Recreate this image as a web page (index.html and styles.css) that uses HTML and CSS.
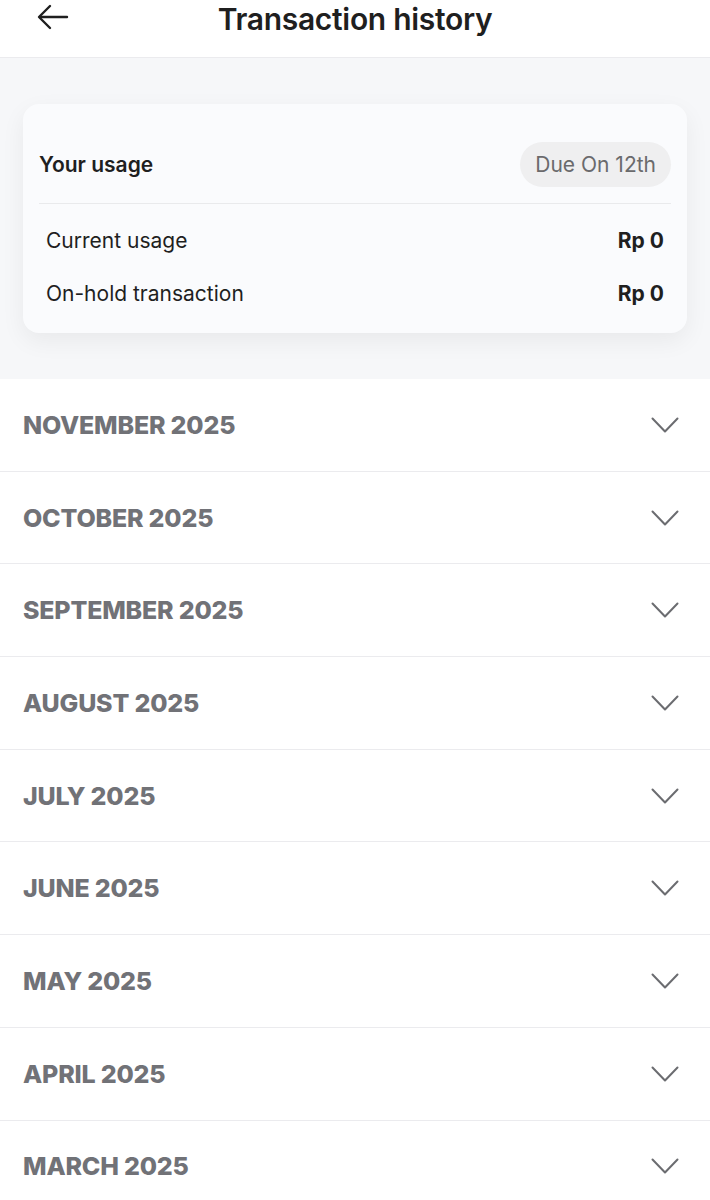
FILE: index.html
```html
<!DOCTYPE html>
<html>

<head>
  <title>Transaction history</title>
  <link rel="stylesheet" href="styles.css">
</head>

<body>
  <div class="top-bar">
    <button class="back-btn">
      <svg width="32" height="26" viewBox="0 0 32 26" fill="none" stroke="#1f1f1f" stroke-width="2.4" stroke-linecap="round" stroke-linejoin="round">
        <path d="M30 13H3" />
        <path d="M13 2L2 13l11 11" />
      </svg>
    </button>
    <h1 class="title">Transaction history</h1>
  </div>

  <div class="usage-section">
    <div class="usage-card">
      <div class="usage-head">
        <span class="usage-title">Your usage</span>
        <span class="due-pill">Due On 12th</span>
      </div>
      <div class="usage-row first">
        <span>Current usage</span>
        <span class="amount">Rp 0</span>
      </div>
      <div class="usage-row">
        <span>On-hold transaction</span>
        <span class="amount">Rp 0</span>
      </div>
    </div>
  </div>

  <div class="month-list" id="months"></div>

  <script>
    var months = ['NOVEMBER 2025', 'OCTOBER 2025', 'SEPTEMBER 2025', 'AUGUST 2025', 'JULY 2025',
      'JUNE 2025', 'MAY 2025', 'APRIL 2025', 'MARCH 2025'];
    var list = document.getElementById('months');
    months.forEach(function (m) {
      var row = document.createElement('div');
      row.className = 'month-row';
      row.innerHTML = '<span class="month-name">' + m + '</span>' +
        '<svg class="chevron" width="28" height="16" viewBox="0 0 28 16" fill="none" stroke="#6b6c70" stroke-width="2" stroke-linecap="round" stroke-linejoin="round">' +
        '<path d="M1.5 1.5L14 14.5 26.5 1.5" /></svg>';
      list.appendChild(row);
    });
  </script>
</body>

</html>
```

FILE: styles.css
```css
body {
  margin: 0;
  font-family: Inter, "Liberation Sans", sans-serif;
  background-color: #fff;
  color: #1f1f1f;
}

.top-bar {
  height: 57px;
  position: relative;
  display: flex;
  align-items: center;
  justify-content: center;
  border-bottom: 1px solid #ebebee;
  background-color: #fff;
}

.back-btn {
  position: absolute;
  left: 37px;
  top: 4px;
  padding: 0;
  border: none;
  background: none;
}

.title {
  margin: 0 0 20px 0;
  font-size: 30px;
  font-weight: 600;
  letter-spacing: -0.3px;
}

.usage-section {
  background-color: #f6f7f9;
  padding: 46px 23px 46px 23px;
}

.usage-card {
  background-color: #fafbfd;
  border-radius: 16px;
  box-shadow: 0 8px 24px rgba(0, 0, 0, 0.06);
  padding: 38px 16px 13px 16px;
}

.usage-head {
  display: flex;
  justify-content: space-between;
  align-items: center;
  padding-bottom: 16px;
  border-bottom: 1px solid #e9eaec;
}

.usage-title {
  font-size: 21px;
  font-weight: 600;
}

.due-pill {
  background-color: #efeff0;
  color: #6a6a6c;
  font-size: 21px;
  border-radius: 23px;
  padding: 10px 15px;
}

.usage-row {
  display: flex;
  justify-content: space-between;
  align-items: center;
  height: 53px;
  padding: 0 7px;
  font-size: 21px;
}

.usage-row.first {
  margin-top: 10px;
}

.amount {
  font-weight: 700;
}

.month-row {
  height: 91.7px;
  display: flex;
  align-items: center;
  justify-content: space-between;
  padding: 0 31px 0 23px;
  border-bottom: 1px solid #ebebee;
}

.month-name {
  font-size: 25px;
  font-weight: 800;
  color: #717277;
  letter-spacing: -0.2px;
}
```
